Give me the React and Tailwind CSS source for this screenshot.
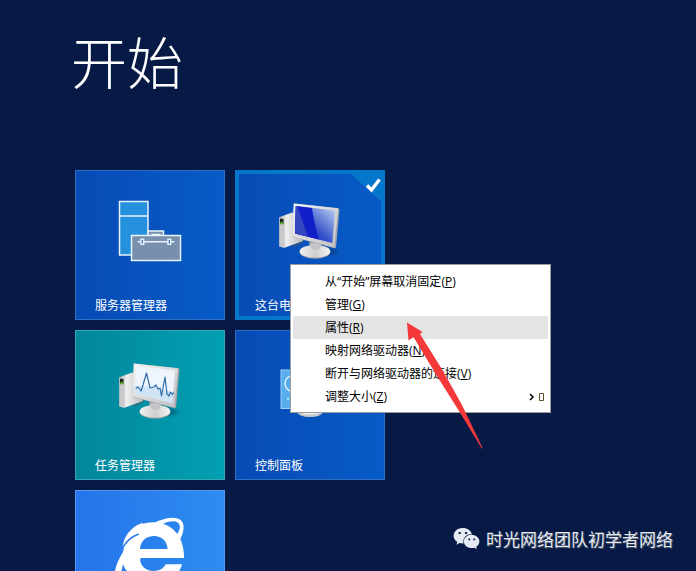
import { FaWeixin } from "react-icons/fa";

function ServerIcon() {
  return (
    <svg viewBox="0 0 70 70" className="size-[70px]" aria-hidden="true">
      <g stroke="#e6f3fb" strokeWidth="1.5">
        <rect x="4.5" y="2.5" width="28.5" height="53.5" fill="#2590dc" />
        <path d="M4.500 17h28.500" />
        <path d="M33 36v-4h15.500v4" fill="#7890ad" />
        <rect x="16.500" y="36.500" width="49" height="25" fill="#7890ad" />
        <path d="M36.500 35.500h9M22.500 42.800h37" />
        <rect x="26" y="40.300" width="2.600" height="5" fill="#2457a5" />
        <rect x="53" y="40.300" width="2.600" height="5" fill="#2457a5" />
      </g>
    </svg>
  );
}

function ComputerIcon({ variant }) {
  const id = "pc-" + variant;
  return (
    <svg viewBox="0 0 70 70" className="size-[70px]" aria-hidden="true">
      <defs>
        <linearGradient id={id + "-case"} x1="0" x2="1">
          <stop offset="0" stopColor="#a9aaad" />
          <stop offset=".3" stopColor="#efefef" />
          <stop offset="1" stopColor="#b9babd" />
        </linearGradient>
        <linearGradient id={id + "-frame"} x1="0" y1="0" x2="1" y2="1">
          <stop offset="0" stopColor="#f4f4f4" />
          <stop offset="1" stopColor="#bfc0c4" />
        </linearGradient>
        <linearGradient id={id + "-glow"} x1="0" y1="1" x2="1" y2="0">
          <stop offset="0" stopColor="#1422b5" />
          <stop offset=".45" stopColor="#3451ca" />
          <stop offset="1" stopColor="#c5d6f4" />
        </linearGradient>
        <linearGradient id={id + "-base"} x1="0" x2="1">
          <stop offset="0" stopColor="#f1f1f1" />
          <stop offset=".5" stopColor="#d0d0d2" />
          <stop offset="1" stopColor="#f3f3f3" />
        </linearGradient>
        <radialGradient id={id + "-shade"}>
          <stop offset="0" stopColor="#042a55" stopOpacity=".7" />
          <stop offset="1" stopColor="#042a55" stopOpacity="0" />
        </radialGradient>
      </defs>
      <ellipse cx="50" cy="53" rx="16" ry="6" fill={`url(#${id}-shade)`} />
      <path d="M14 46q8-1 12-5M18 47q8-2 11-5" stroke="#4a5568" strokeWidth="1" fill="none" />
      <path d="M4.3 18.2 17 13.5 28 16v26L9.500 48.800 4.300 47.500Z" fill={`url(#${id}-case)`} />
      <path d="M4.300 18.200 9.300 19v29.700l-5-1.200Z" fill="#c8c9cb" />
      <path d="M5 19.500 8.500 20v5l-3.500-.500Z" fill="#1c2a1c" />
      <path d="M5.500 23 8.500 23.300v2.300l-3-.3Z" fill="#5eae2a" />
      <path d="M34 42 47 44 46 50 35 50Z" fill="#999a9e" />
      <ellipse cx="40" cy="53.200" rx="15.300" ry="6.600" fill="#a4a5a9" />
      <ellipse cx="40" cy="52.300" rx="15.300" ry="6.300" fill={`url(#${id}-base)`} />
      <path d="M35 44h11l-1 6q-4 2-9-.5Z" fill="#c4c5c8" />
      <path d="M18.800 4.500 63.200 9.300 64.500 10.500 61 48.600 59.500 49.300 17.500 38Z" fill="#a3a5aa" />
      <path d="M18.800 4.500 63.200 9.300 59.300 48.500 17.200 37.500Z" fill={`url(#${id}-frame)`} />
      {variant === "monitor" ? (
        <>
          <path d="M20.800 7 60 11.500 57.300 44 20 34.500Z" fill="#eef5fc" />
          <path d="M20.300 27q15-1 38 6.500L57.300 44 20 34.500Z" fill="#cfe4f4" />
          <path
            d="M20.800 29.500 23 28l3 4 2-6 3.500-12 3.500 15 4-1 2-2 2 4 2-1 1.500 8 3.500-19 2 17 2 2 1.500-4 2 2.500 1-2"
            fill="none"
            stroke="#326da9"
            strokeWidth="1.200"
            strokeLinejoin="round"
          />
        </>
      ) : (
        <>
          <path d="M20.800 7 60 11.500 57.300 44 20 34.500Z" fill={`url(#${id}-glow)`} />
          <path d="M20.800 7 37 8.900Q39 24 44 40.600L20 34.500Z" fill="#101fc8" />
          <path d="M20.800 7 22.500 7.200 33 37.800 20 34.500Z" fill="#3345bf" />
        </>
      )}
    </svg>
  );
}

function ControlPanelIcon() {
  return (
    <svg viewBox="0 0 70 70" className="size-[70px]" aria-hidden="true">
      <ellipse cx="35" cy="52.500" rx="13" ry="5.500" fill="#c9cacc" />
      <ellipse cx="35" cy="51" rx="12" ry="4.500" fill="#ececec" />
      <rect x="6" y="11" width="57" height="38.500" fill="#58acec" stroke="#9bd2f8" />
      <circle cx="18" cy="24.500" r="8" fill="none" stroke="#d7effd" strokeWidth="1.500" />
      <path d="M12 40h30" stroke="#d7effd" strokeWidth="1.500" strokeDasharray="2 2" />
    </svg>
  );
}

function ExplorerIcon() {
  return (
    <svg viewBox="105 102 270 270" className="size-[90px] overflow-visible" aria-hidden="true">
      <g fill="#fff">
        <path
          fillRule="evenodd"
          d="M342 219H210C210 243 228 258 250 258 268 258 281 251 287 238H336C326 276 292 297 250 297 200 297 160 262 160 212 158 152 198 112 250 112 306 112 344 156 342 219ZM210 192H293C291 168 275 153 252 153 228 153 212 168 210 192Z"
        />
        <path d="M252 114C282 98 318 92 333 106 346 119 341 143 331 162L320 150C332 133 333 119 322 112 312 106 292 110 278 117Z" />
        <path d="M204 149C165 183 138 228 134 265 130 310 158 318 205 290L195 275C170 291 151 289 155 264 160 225 180 180 204 149Z" />
        <path d="M158 184C162 150 192 118 220 114L204 148Z" />
        <path d="M204 149 165 190 150 235 175 262 212 220Z" />
      </g>
      <path d="M160 185C170 168 188 154 206 147" fill="none" stroke="#2b7cee" strokeWidth="5" />
      <path d="M153 264Q156 250 160 238L169 264Z" fill="#2b7cee" />
    </svg>
  );
}

function Tile({ label, icon, color, selected, hideLabel }) {
  return (
    <button
      type="button"
      aria-label={label}
      aria-pressed={Boolean(selected)}
      className={`relative flex size-[150px] flex-col items-center justify-between border pt-7 pb-1 text-white ${color}`}
    >
      {icon}
      {!hideLabel && <span className="w-full pl-[19px] text-left text-[12px] leading-5">{label}</span>}
      {selected && (
        <span className="absolute -inset-px border-4 border-[#0477cb]">
          <svg viewBox="0 0 34 34" className="absolute -top-1 -right-1 size-[34px]" aria-hidden="true">
            <path d="M0 4h34v31Z" fill="#0477cb" />
            <path d="M16 15.500 20.500 20 28.500 9.500" fill="none" stroke="#fff" strokeWidth="3.400" />
          </svg>
        </span>
      )}
    </button>
  );
}

const menuItems = [
  { text: "从“开始”屏幕取消固定", hotkey: "P" },
  { text: "管理", hotkey: "G" },
  { text: "属性", hotkey: "R", active: true },
  { text: "映射网络驱动器", hotkey: "N" },
  { text: "断开与网络驱动器的连接", hotkey: "V" },
  { text: "调整大小", hotkey: "Z", submenu: true },
];

function ContextMenu() {
  return (
    <div
      role="menu"
      className="absolute top-[264px] left-[290px] w-[261px] border border-[#9c9c9c] bg-white px-0.5 pt-[5px] pb-1 font-['Open_Sans','Noto_Sans_CJK_SC',sans-serif]"
    >
      {menuItems.map((item) => (
        <button
          key={item.hotkey}
          type="button"
          role="menuitem"
          className={`flex h-[23px] w-full items-center justify-between pr-1 pl-8 text-[12px] text-black ${item.active ? "bg-[#e4e4e4]" : ""}`}
        >
          <span>
            {item.text}(<u>{item.hotkey}</u>)
          </span>
          {item.submenu && (
            <svg viewBox="0 0 16 10" className="h-[10px] w-4" aria-hidden="true">
              <path d="M2 2 5 5 2 8" fill="none" stroke="#000" strokeWidth="1.500" />
              <path d="M11.500 1.500h4v7h-4z" fill="none" stroke="#5b4a28" />
            </svg>
          )}
        </button>
      ))}
    </div>
  );
}

export default function App() {
  return (
    <main className="relative h-screen overflow-hidden bg-[#071a46] px-[75px] font-['Noto_Sans_CJK_SC',sans-serif]">
      <h1 className="-ml-1 pt-5 text-[56px] leading-[80px] font-light text-white">开始</h1>
      <div className="mt-[70px] grid w-max grid-cols-2 gap-[10px]">
        <Tile
          label="服务器管理器"
          icon={<ServerIcon />}
          color="border-[#2f70c6] bg-linear-to-r from-[#084bb5] to-[#075bc6]"
        />
        <Tile
          label="这台电脑"
          icon={<ComputerIcon variant="desktop" />}
          color="border-[#2f70c6] bg-linear-to-r from-[#084bb5] to-[#075bc6]"
          selected
        />
        <Tile
          label="任务管理器"
          icon={<ComputerIcon variant="monitor" />}
          color="border-[#35a6b5] bg-linear-to-r from-[#03869c] to-[#02a0b2]"
        />
        <Tile
          label="控制面板"
          icon={<ControlPanelIcon />}
          color="border-[#2f70c6] bg-linear-to-r from-[#084bb5] to-[#075bc6]"
        />
        <Tile
          label="Internet Explorer"
          icon={<ExplorerIcon />}
          color="border-[#5297f0] bg-linear-to-r from-[#2674ea] to-[#2e8cf0]"
          hideLabel
        />
      </div>

      <ContextMenu />

      <svg viewBox="0 0 80 130" className="pointer-events-none absolute top-[321px] left-[405px] h-[130px] w-20" aria-hidden="true">
        <path d="M2 1.500 17.500 11 15 13 38 50 57 84 78 128 76.500 127 54 90 32 55 8.500 16 3.500 19.500Z" fill="#f5383a" />
      </svg>

      <div className="absolute right-[23px] bottom-[19px] flex items-center gap-[6px] text-[17px] leading-[26px] text-[#e6eaf2] text-shadow-[1px_1px_1px_#555a66]">
        <FaWeixin className="size-[27px]" aria-hidden="true" />
        <span>时光网络团队初学者网络</span>
      </div>
    </main>
  );
}
